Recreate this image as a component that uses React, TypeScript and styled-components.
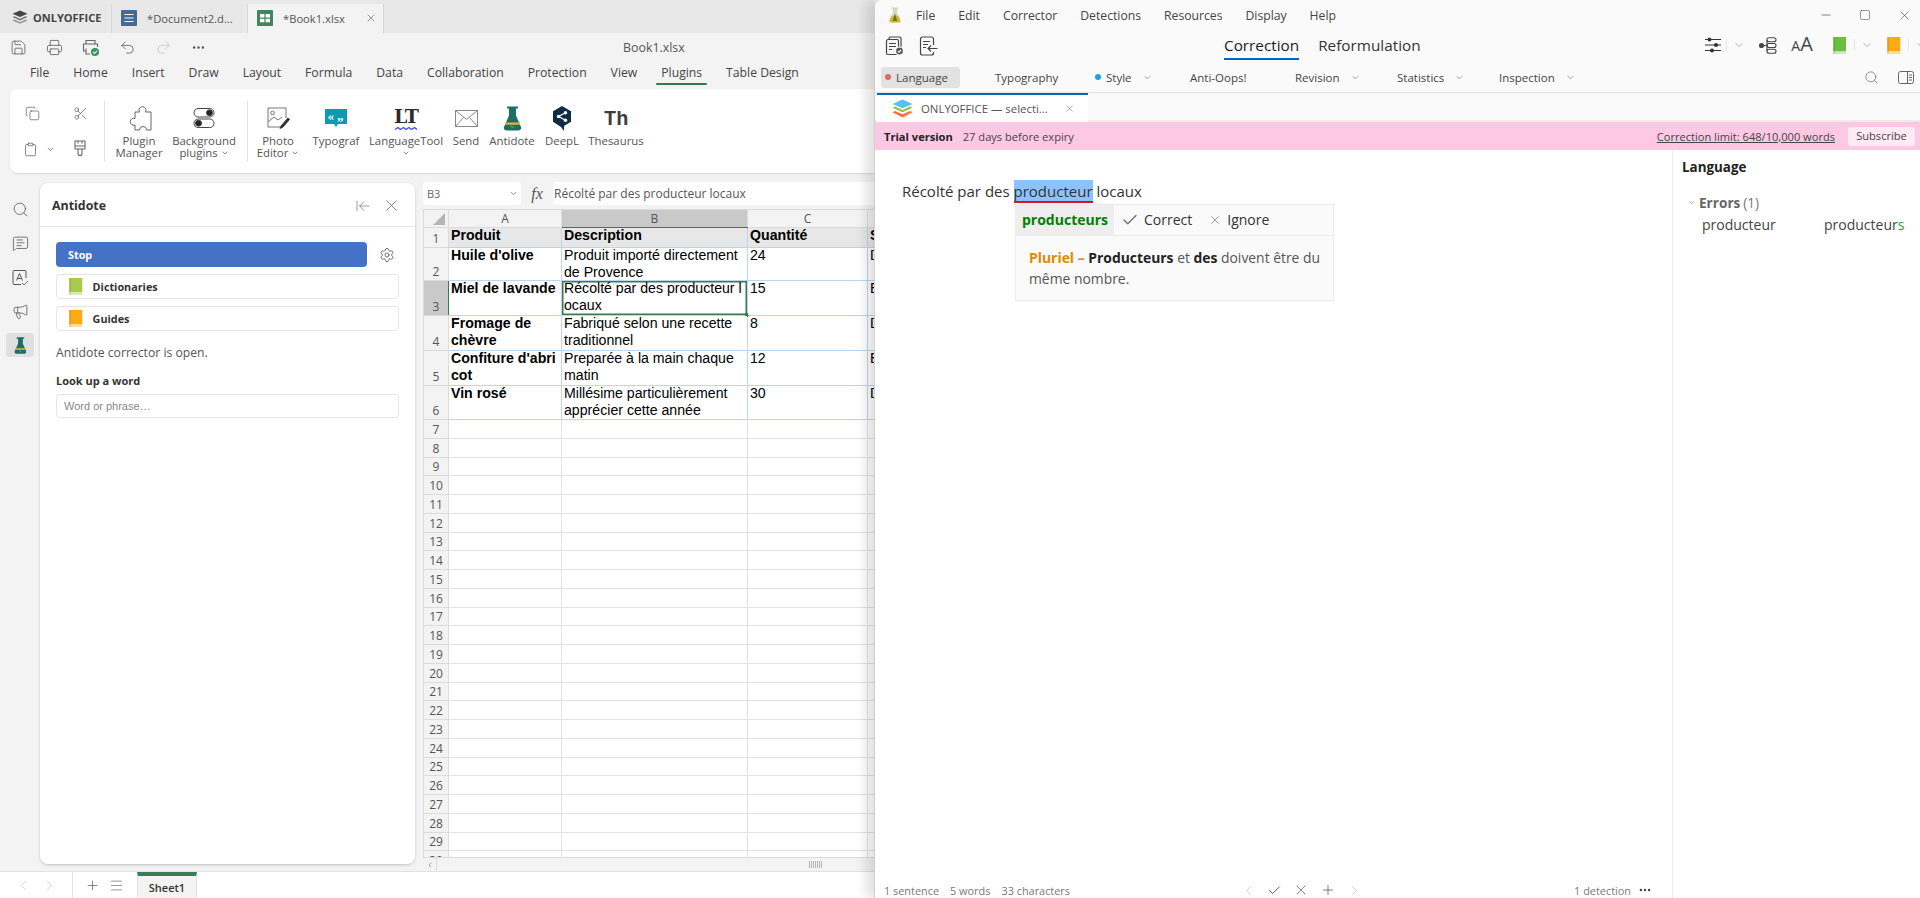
import styled, { createGlobalStyle } from "styled-components";
import {
  ArrowLeftToLine,
  Check,
  ChevronDown,
  ChevronLeft,
  ChevronRight,
  Clipboard,
  Copy,
  Menu,
  Megaphone,
  MessageSquareText,
  Minus,
  MoreHorizontal,
  Plus,
  Printer,
  Redo2,
  Save,
  Scissors,
  Search,
  Settings,
  Square,
  Undo2,
  X,
} from "lucide-react";

const UI = `"Open Sans", "Noto Sans", sans-serif`;

const GlobalStyle = createGlobalStyle`
  html, body { margin: 0; padding: 0; height: 100%; overflow: hidden; }
  body { font-family: ${UI}; color: #333; background: #f3f3f3; }
  #root { height: 100%; }
  * { box-sizing: border-box; }
`;

function Flask({ size = 25 }: { size?: number }) {
  return (
    <svg width={size * 0.76} height={size} viewBox="0 0 19 25">
      <path d="M4 0.5h11v2h-2v7l5 11.5a2.5 2.5 0 0 1-2.3 3.5H3.3A2.5 2.5 0 0 1 1 21l5-11.5v-7H4z" fill="#1f6e66" />
      <path d="M2.6 16.6h13.8l1 2.2H1.6z" fill="#e3b23c" />
      <path d="M7.5 20l2 1.4 1.6-1" stroke="#8fb24a" strokeWidth="1" fill="none" />
    </svg>
  );
}

function AppFlask() {
  return (
    <svg width="12" height="16" viewBox="0 0 19 25">
      <path d="M4 0.5h11v2h-2v7l5 11.5a2.5 2.5 0 0 1-2.3 3.5H3.3A2.5 2.5 0 0 1 1 21l5-11.5v-7H4z" fill="#d9d4c4" />
      <path d="M4.5 13.5h10l3.4 7.5a2.5 2.5 0 0 1-2.2 3.5H3.3A2.5 2.5 0 0 1 1 21z" fill="#f0a92a" />
      <path d="M9.5 10l3.5 12H6z" fill="#2f8f3a" />
    </svg>
  );
}

function BookIcon({ color, edge, height = 17 }: { color: string; edge: string; height?: number }) {
  return (
    <svg width={height * 0.8} height={height} viewBox="0 0 13 17">
      <rect x="0" y="0" width="13" height="14.5" fill={color} />
      <rect x="0" y="14.5" width="13" height="2.5" fill={edge} />
      <rect x="0" y="0" width="1.4" height="17" fill="#000" opacity="0.14" />
    </svg>
  );
}

function StackLogo() {
  return (
    <svg width="16" height="15" viewBox="0 0 16 15">
      <path d="M8 0.5l7.5 3.3L8 7.1.5 3.8z" fill="#444" />
      <path d="M2.4 6.2L8 8.7l5.6-2.5 1.9.9L8 10.4.5 7.1z" fill="#777" />
      <path d="M2.4 9.5L8 12l5.6-2.5 1.9.9L8 13.8.5 10.4z" fill="#999" />
    </svg>
  );
}

function ColorStack() {
  return (
    <svg width="21" height="20" viewBox="0 0 21 20">
      <path d="M10.5 0.5l10 4.4-10 4.4-10-4.4z" fill="#55c1ee" />
      <path d="M3 7.6l7.5 3.3L18 7.6l2.5 1.2-10 4.4-10-4.4z" fill="#95c03c" />
      <path d="M3 12l7.5 3.3L18 12l2.5 1.2-10 5.4-10-5.4z" fill="#ff6e3c" />
    </svg>
  );
}

function DocBadge() {
  return (
    <svg width="16" height="16" viewBox="0 0 16 16">
      <rect width="16" height="16" rx="1" fill="#446995" />
      <path d="M3.5 4.5h9M3.5 8h9M3.5 11.5h9" stroke="#fff" strokeWidth="1.2" />
    </svg>
  );
}

function SheetBadge() {
  return (
    <svg width="16" height="16" viewBox="0 0 16 16">
      <rect width="16" height="16" rx="1" fill="#40865c" />
      <path d="M3 4h4.4v3.6H3zM8.6 4H13v3.6H8.6zM3 8.8h4.4v3.4H3zM8.6 8.8H13v3.4H8.6z" fill="#fff" />
    </svg>
  );
}

function PrintOk() {
  return (
    <svg width="18" height="18" viewBox="0 0 18 18" fill="none" stroke="#666" strokeWidth="1.1">
      <path d="M4 5V1.5h9V5M4 12H1.5V5h14v3M4 9.5V15h4" />
      <circle cx="13" cy="13" r="4" fill="#2c9a5b" stroke="none" />
      <path d="M11 13l1.5 1.5 2.5-2.7" stroke="#fff" />
    </svg>
  );
}

function PainterIcon() {
  return (
    <svg width="12" height="18" viewBox="0 0 12 18" fill="none" stroke="#666" strokeWidth="1.1">
      <path d="M1 1h10v8H1zM1 6h10M4 1v2.5M8 1v2.5" />
      <path d="M4 9v4.5a2 2 0 0 0 4 0V9" />
    </svg>
  );
}

function PuzzleIcon() {
  return (
    <svg width="26" height="26" viewBox="0 0 26 26" fill="none" stroke="#666" strokeWidth="1">
      <path d="M9 7h4.5a3.5 3.5 0 1 1 6 0H25v18h-4.5a3.5 3.5 0 0 0-7 0H9v-5a3.5 3.5 0 1 1 0-6.5z" />
    </svg>
  );
}

function ToggleIcon() {
  return (
    <svg width="22" height="20" viewBox="0 0 22 20" fill="none" stroke="#444" strokeWidth="1">
      <rect x="1" y="0.5" width="20" height="8.5" rx="4.2" />
      <rect x="1" y="11" width="20" height="8.5" rx="4.2" />
      <circle cx="16.5" cy="4.8" r="3" fill="#222" />
      <circle cx="5.5" cy="15.2" r="3" fill="#222" />
    </svg>
  );
}

function PhotoIcon() {
  return (
    <svg width="24" height="22" viewBox="0 0 24 22" fill="none" stroke="#777" strokeWidth="1">
      <path d="M2 1h18v10M2 1v19h12" />
      <circle cx="6.5" cy="6" r="1.8" />
      <path d="M2 15l6-5 4 3 4-3" />
      <path d="M15 19l7-8 1.5 1.5-7 8-2.4.8z" fill="#333" stroke="#333" />
    </svg>
  );
}

function TypografIcon() {
  return (
    <svg width="22" height="19" viewBox="0 0 22 19">
      <path d="M0 0h22v15H13l-2 3-2-3H0z" fill="#0e9ab0" />
      <text x="2.5" y="11" fontSize="13" fontWeight="700" fill="#fff" fontFamily="Liberation Serif, serif">«</text>
      <text x="12" y="11" fontSize="13" fontWeight="700" fill="#fff" fontFamily="Liberation Serif, serif">„</text>
    </svg>
  );
}

function Squiggle() {
  return (
    <svg width="22" height="5" viewBox="0 0 22 5" fill="none" stroke="#3d4fe0" strokeWidth="1.4">
      <path d="M0 3.5l3-2 2.5 2 3-2 2.5 2 3-2 2.5 2 3-2 2.5 2" />
    </svg>
  );
}

function MailIcon() {
  return (
    <svg width="23" height="17" viewBox="0 0 23 17" fill="none" stroke="#888" strokeWidth="1">
      <rect x="0.5" y="0.5" width="22" height="16" />
      <path d="M0.5 0.5l11 9 11-9M0.5 16.5l8-9M22.5 16.5l-8-9" />
    </svg>
  );
}

function DeepLIcon() {
  return (
    <svg width="20" height="25" viewBox="0 0 20 25">
      <path d="M10 0l9 5.2v10.6L12 20v5l-3-4-8-5.2V5.2z" fill="#0f2b46" />
      <circle cx="6.5" cy="10.5" r="1.7" fill="#fff" />
      <circle cx="13.5" cy="6.8" r="1.7" fill="#fff" />
      <circle cx="13.5" cy="14.2" r="1.7" fill="#fff" />
      <path d="M6.5 10.5l7-3.7M6.5 10.5l7 3.7" stroke="#fff" strokeWidth="1.2" />
    </svg>
  );
}

function DocCheck() {
  return (
    <svg width="20" height="20" viewBox="0 0 20 20" fill="none" stroke="#444" strokeWidth="1.2">
      <path d="M4 3.5V2.5a1.5 1.5 0 0 1 1.5-1.5h9A1.5 1.5 0 0 1 16 2.5V11" />
      <rect x="1.5" y="3.5" width="12" height="15" rx="1.5" />
      <path d="M4 7.5h7M4 10.5h7M4 13.5h3" />
      <circle cx="14.5" cy="15" r="4" fill="#555" stroke="#fff" />
      <path d="M12.8 15l1.2 1.2 2.2-2.4" stroke="#fff" />
    </svg>
  );
}

function DocArrow() {
  return (
    <svg width="20" height="20" viewBox="0 0 20 20" fill="none" stroke="#444" strokeWidth="1.2">
      <path d="M14.5 9V3a2 2 0 0 0-2-2h-9a2 2 0 0 0-2 2v14a2 2 0 0 0 2 2h9a2 2 0 0 0 2-2v-1" />
      <path d="M4 5.5h7M4 8.5h5M4 11.5h3" />
      <path d="M18.5 12.5H9M12 9.5l-3 3 3 3" />
    </svg>
  );
}

function SlidersIcon() {
  return (
    <svg width="16" height="16" viewBox="0 0 16 16" stroke="#333" strokeWidth="1.2" fill="#333">
      <path d="M0 2.5h16M0 8h16M0 13.5h16" />
      <circle cx="4.5" cy="2.5" r="2" stroke="none" />
      <circle cx="11" cy="8" r="2" stroke="none" />
      <circle cx="7" cy="13.5" r="2" stroke="none" />
    </svg>
  );
}

function TreeIcon() {
  return (
    <svg width="18" height="17" viewBox="0 0 18 17" fill="none" stroke="#444" strokeWidth="1.1">
      <circle cx="2.5" cy="8.5" r="2" fill="#444" />
      <path d="M4.5 8.5H8M8 3v11" />
      <rect x="8" y="0.8" width="9" height="4" rx="2" />
      <rect x="8" y="6.5" width="9" height="4" rx="2" />
      <rect x="8" y="12.2" width="9" height="4" rx="2" />
    </svg>
  );
}

function PanelIcon() {
  return (
    <svg width="16" height="13" viewBox="0 0 16 13" fill="none" stroke="#666">
      <rect x="0.5" y="0.5" width="15" height="12" rx="2" />
      <path d="M9.5 0.5v12M11 4h3M11 6.5h3M11 9h3" />
    </svg>
  );
}

function AddInIcon() {
  return (
    <svg width="17" height="17" viewBox="0 0 17 17" fill="none" stroke="#555" strokeWidth="1">
      <path d="M9 15.5H2a1 1 0 0 1-1-1v-12a1 1 0 0 1 1-1h11a1 1 0 0 1 1 1V9" />
      <path d="M4.5 11.5L7.5 4.5l3 7M5.5 9.5h4" />
      <path d="M10 14l2 2 4-4" stroke="#4a7fc9" />
    </svg>
  );
}

const rail = [
  <Search size={17} strokeWidth={1.1} key="s" />,
  <MessageSquareText size={17} strokeWidth={1.1} key="c" />,
  <AddInIcon key="a" />,
  <Megaphone size={17} strokeWidth={1.1} key="m" />,
];

const leftMenu = ["File", "Home", "Insert", "Draw", "Layout", "Formula", "Data", "Collaboration", "Protection", "View", "Plugins", "Table Design"];
const rightMenu = ["File", "Edit", "Corrector", "Detections", "Resources", "Display", "Help"];

const sheetRows = [
  { n: 1, h: 20, a: "Produit", b: "Description", c: "Quantité", d: "S", head: true },
  { n: 2, h: 33, a: "Huile d'olive", b: "Produit importé directement\nde Provence", c: "24", d: "D" },
  { n: 3, h: 35, a: "Miel de lavande", b: "Récolté par des producteur l\nocaux", c: "15", d: "E", active: true },
  { n: 4, h: 35, a: "Fromage de\nchèvre", b: "Fabriqué selon une recette\ntraditionnel", c: "8", d: "D" },
  { n: 5, h: 35, a: "Confiture d'abri\ncot", b: "Preparée à la main chaque\nmatin", c: "12", d: "E" },
  { n: 6, h: 34, a: "Vin rosé", b: "Millésime particulièrement\napprécier cette année", c: "30", d: "D" },
];
const emptyRows = Array.from({ length: 24 }, (_, i) => i + 7);

export default function App() {
  return (
    <Page>
      <GlobalStyle />
      <LeftWindow>
        <TabBar>
          <BrandTab>
            <StackLogo />
            ONLYOFFICE
          </BrandTab>
          <DocTab $width={136}>
            <DocBadge />
            <DocName>*Document2.d...</DocName>
          </DocTab>
          <DocTab $width={136} $active>
            <SheetBadge />
            <DocName>*Book1.xlsx</DocName>
            <X size={12} strokeWidth={1.2} />
          </DocTab>
        </TabBar>
        <QuickBar>
          <QuickIcons>
            <Save size={17} strokeWidth={1.1} />
            <Printer size={17} strokeWidth={1.1} />
            <PrintOk />
            <Undo2 size={17} strokeWidth={1.1} />
            <Redo2 size={17} strokeWidth={1.1} color="#c4c4c4" />
            <MoreHorizontal size={15} />
          </QuickIcons>
          <FileTitle>Book1.xlsx</FileTitle>
        </QuickBar>
        <MenuRow>
          {leftMenu.map((m) => (
            <MenuItem key={m} $active={m === "Plugins"}>
              {m}
            </MenuItem>
          ))}
        </MenuRow>
        <Ribbon>
          <ClipGrid>
            <Copy size={15} strokeWidth={1.1} />
            <Scissors size={15} strokeWidth={1.1} />
            <ClipCell>
              <Clipboard size={15} strokeWidth={1.1} />
              <ChevronDown size={9} />
            </ClipCell>
            <PainterIcon />
          </ClipGrid>
          <RibbonDivider />
          <RibbonItem $width={68}>
            <RibbonIcon>
              <PuzzleIcon />
            </RibbonIcon>
            <RibbonLabel>Plugin{"\n"}Manager</RibbonLabel>
          </RibbonItem>
          <RibbonItem $width={62}>
            <RibbonIcon>
              <ToggleIcon />
            </RibbonIcon>
            <RibbonLabel>
              Background{"\n"}plugins <ChevronDown size={8} />
            </RibbonLabel>
          </RibbonItem>
          <RibbonDivider $before={12} />
          <RibbonItem $width={60}>
            <RibbonIcon>
              <PhotoIcon />
            </RibbonIcon>
            <RibbonLabel>
              Photo{"\n"}Editor <ChevronDown size={8} />
            </RibbonLabel>
          </RibbonItem>
          <RibbonItem $width={56}>
            <RibbonIcon>
              <TypografIcon />
            </RibbonIcon>
            <RibbonLabel>Typograf</RibbonLabel>
          </RibbonItem>
          <RibbonItem $width={84}>
            <RibbonIcon>
              <LtStack>
                <LtMark>LT</LtMark>
                <Squiggle />
              </LtStack>
            </RibbonIcon>
            <RibbonLabel>
              LanguageTool{"\n"}
              <ChevronDown size={8} />
            </RibbonLabel>
          </RibbonItem>
          <RibbonItem $width={36}>
            <RibbonIcon>
              <MailIcon />
            </RibbonIcon>
            <RibbonLabel>Send</RibbonLabel>
          </RibbonItem>
          <RibbonItem $width={56}>
            <RibbonIcon>
              <Flask />
            </RibbonIcon>
            <RibbonLabel>Antidote</RibbonLabel>
          </RibbonItem>
          <RibbonItem $width={44}>
            <RibbonIcon>
              <DeepLIcon />
            </RibbonIcon>
            <RibbonLabel>DeepL</RibbonLabel>
          </RibbonItem>
          <RibbonItem $width={64}>
            <RibbonIcon>
              <ThMark>Th</ThMark>
            </RibbonIcon>
            <RibbonLabel>Thesaurus</RibbonLabel>
          </RibbonItem>
        </Ribbon>
        <Workspace>
          <Rail>
            {rail.map((icon, i) => (
              <RailButton key={i}>{icon}</RailButton>
            ))}
            <RailButton $active>
              <Flask size={17} />
            </RailButton>
          </Rail>
          <Panel>
            <PanelHeader>
              <PanelTitle>Antidote</PanelTitle>
              <ArrowLeftToLine size={16} strokeWidth={1} />
              <X size={19} strokeWidth={1} />
            </PanelHeader>
            <PanelBody>
              <StopRow>
                <StopButton>Stop</StopButton>
                <Settings size={16} strokeWidth={1.1} />
              </StopRow>
              <BookButton>
                <BookIcon color="#a9c94f" edge="#dfe8c0" />
                Dictionaries
              </BookButton>
              <BookButton>
                <BookIcon color="#fdab14" edge="#fbdc9c" />
                Guides
              </BookButton>
              <PanelNote>Antidote corrector is open.</PanelNote>
              <LookupLabel>Look up a word</LookupLabel>
              <LookupInput>Word or phrase…</LookupInput>
            </PanelBody>
          </Panel>
          <SheetArea>
            <FormulaBar>
              <NameBox>
                B3
                <ChevronDown size={9} />
              </NameBox>
              <FxMark>fx</FxMark>
              <FormulaInput>Récolté par des producteur locaux</FormulaInput>
            </FormulaBar>
            <GridClip>
              <SheetTable>
                <colgroup>
                  <col width={25} />
                  <col width={113} />
                  <col width={186} />
                  <col width={120} />
                  <col width={7} />
                </colgroup>
                <thead>
                  <tr>
                    <ColHead>
                      <Corner />
                    </ColHead>
                    <ColHead>A</ColHead>
                    <ColHead $active>B</ColHead>
                    <ColHead>C</ColHead>
                    <ColHead />
                  </tr>
                </thead>
                <tbody>
                  {sheetRows.map((r) => (
                    <tr key={r.n} style={{ height: r.h }}>
                      <RowHead $active={r.active}>{r.n}</RowHead>
                      <Cell $bold $table $head={r.head}><CellText>{r.a}</CellText></Cell>
                      <Cell $bold={r.head} $table $head={r.head} $selected={r.active}>
                        <CellText>{r.b}</CellText>
                        {r.active && <FillHandle />}
                      </Cell>
                      <Cell $bold={r.head} $table $head={r.head}><CellText>{r.c}</CellText></Cell>
                      <Cell $bold={r.head} $table $head={r.head}><CellText>{r.d}</CellText></Cell>
                    </tr>
                  ))}
                  {emptyRows.map((n) => (
                    <EmptyRow key={n}>
                      <RowHead>{n}</RowHead>
                      <Cell />
                      <Cell />
                      <Cell />
                      <Cell />
                    </EmptyRow>
                  ))}
                </tbody>
              </SheetTable>
            </GridClip>
            <HScroll>
              <ScrollArrow>
                <ChevronLeft size={8} />
              </ScrollArrow>
              <ScrollTrack>
                <ScrollGrip />
              </ScrollTrack>
            </HScroll>
          </SheetArea>
        </Workspace>
        <SheetTabs>
          <SheetNav>
            <ChevronLeft size={17} strokeWidth={0.9} />
            <ChevronRight size={17} strokeWidth={0.9} />
          </SheetNav>
          <SheetTools>
            <Plus size={15} strokeWidth={1.1} />
            <Menu size={15} strokeWidth={1.4} color="#888" />
          </SheetTools>
          <SheetTab>Sheet1</SheetTab>
        </SheetTabs>
      </LeftWindow>

      <RightWindow>
        <TitleBar>
          <AppMark>
            <AppFlask />
          </AppMark>
          {rightMenu.map((m) => (
            <TitleMenu key={m}>{m}</TitleMenu>
          ))}
          <WindowButtons>
            <Minus size={14} strokeWidth={1.1} />
            <Square size={12} strokeWidth={1.1} />
            <X size={15} strokeWidth={1} />
          </WindowButtons>
        </TitleBar>
        <ModeBar>
          <ModeIcons>
            <DocCheck />
            <DocArrow />
          </ModeIcons>
          <ModeTabs>
            <ModeTab $active>Correction</ModeTab>
            <ModeTab>Reformulation</ModeTab>
          </ModeTabs>
          <ModeTools>
            <SlidersIcon />
            <ToolChevron $gap={5}><ChevronDown size={12} strokeWidth={1} /></ToolChevron>
            <TreeIcon />
            <SizeMark>
              <small>A</small>A
            </SizeMark>
            <BookIcon color="#6abf40" edge="#cfe6c4" height={17} />
            <ToolChevron $gap={8}><ChevronDown size={12} strokeWidth={1} /></ToolChevron>
            <BookIcon color="#fdab14" edge="#fbdc9c" height={17} />
            <ToolChevron $gap={7}><ChevronDown size={12} strokeWidth={1} /></ToolChevron>
          </ModeTools>
        </ModeBar>
        <FilterBar>
          <FilterChip $active $width={79} $pad={4}>
            <Dot $color="#d86b6b" />
            Language
          </FilterChip>
          <FilterChip $width={130} $pad={35}>Typography</FilterChip>
          <FilterChip $width={90} $pad={5}>
            <Dot $color="#1ba1e8" />
            Style
            <ChevronDown size={11} strokeWidth={1} />
          </FilterChip>
          <FilterChip $width={105} $pad={10}>Anti-Oops!</FilterChip>
          <FilterChip $width={102} $pad={10}>
            Revision
            <ChevronDown size={11} strokeWidth={1} />
          </FilterChip>
          <FilterChip $width={102} $pad={10}>
            Statistics
            <ChevronDown size={11} strokeWidth={1} />
          </FilterChip>
          <FilterChip $width={100} $pad={10}>
            Inspection
            <ChevronDown size={11} strokeWidth={1} />
          </FilterChip>
          <FilterTools>
            <Search size={15} strokeWidth={1.1} />
            <PanelIcon />
          </FilterTools>
        </FilterBar>
        <DocStrip>
          <DocStripTab>
            <ColorStack />
            <DocStripName>ONLYOFFICE — selecti...</DocStripName>
            <X size={11} strokeWidth={1} />
          </DocStripTab>
        </DocStrip>
        <TrialBanner>
          <strong>Trial version</strong>
          <span>27 days before expiry</span>
          <LimitLink>Correction limit: 648/10,000 words</LimitLink>
          <SubscribeButton>Subscribe</SubscribeButton>
        </TrialBanner>
        <Editor>
          <EditorMain>
            <EditorText>
              Récolté par des <Marked>producteur</Marked> locaux
              <Popover>
                <PopoverHead>
                  <Suggestion>producteurs</Suggestion>
                  <PopAction $gap={9}>
                    <Check size={18} strokeWidth={1.6} />
                    Correct
                  </PopAction>
                  <PopAction>
                    <X size={14} strokeWidth={1} />
                    Ignore
                  </PopAction>
                </PopoverHead>
                <PopoverBody>
                  <Rule>Pluriel – </Rule>
                  <b>Producteurs</b> et <b>des</b> doivent être du même nombre.
                </PopoverBody>
              </Popover>
            </EditorText>
            <StatusBar>
              <StatusCounts>
                <span>1 sentence</span>
                <span>5 words</span>
                <span>33 characters</span>
              </StatusCounts>
              <StatusNav>
                <ChevronLeft size={15} strokeWidth={0.9} color="#aaa" />
                <Check size={15} strokeWidth={1.3} />
                <X size={16} strokeWidth={1} />
                <Plus size={16} strokeWidth={1} />
                <ChevronRight size={15} strokeWidth={0.9} color="#aaa" />
              </StatusNav>
              <StatusRight>
                1 detection
                <MoreHorizontal size={14} strokeWidth={2.2} />
              </StatusRight>
            </StatusBar>
          </EditorMain>
          <SidePanel>
            <SideTitle>Language</SideTitle>
            <SideGroup>
              <ChevronDown size={9} strokeWidth={1.5} />
              <b>Errors</b> (1)
            </SideGroup>
            <SideRow>
              <span>producteur</span>
              <span>
                producteur<GreenLetter>s</GreenLetter>
              </span>
            </SideRow>
          </SidePanel>
        </Editor>
      </RightWindow>
    </Page>
  );
}

const Page = styled.div`
  display: flex;
  width: 1920px;
  height: 898px;
  overflow: hidden;
`;

const LeftWindow = styled.div`
  width: 874px;
  flex: none;
  display: flex;
  flex-direction: column;
  background: #f3f3f3;
  font-size: 12.2px;
`;

const TabBar = styled.div`
  height: 33px;
  display: flex;
  background: #e8e8e8;
  padding-top: 4px;
`;

const BrandTab = styled.div`
  width: 112px;
  display: flex;
  align-items: center;
  gap: 5px;
  padding: 0 0 3px 12px;
  font-size: 11px;
  font-weight: 700;
  color: #444;
  border-right: 1px solid #d8d8d8;
`;

const DocTab = styled.div<{ $width: number; $active?: boolean }>`
  width: ${(p) => p.$width}px;
  display: flex;
  align-items: center;
  gap: 10px;
  padding: 0 6px 1px 9px;
  font-size: 11.2px;
  color: #555;
  background: ${(p) => (p.$active ? "#f3f3f3" : "transparent")};
  border-right: 1px solid #d8d8d8;
`;

const DocName = styled.span`
  flex: 1;
  white-space: nowrap;
`;

const QuickBar = styled.div`
  height: 29px;
  position: relative;
  display: flex;
  align-items: center;
`;

const QuickIcons = styled.div`
  display: flex;
  align-items: center;
  gap: 19px;
  padding-left: 10px;
  color: #555;
`;

const FileTitle = styled.div`
  position: absolute;
  left: 623px;
  top: 6px;
  font-size: 12.4px;
  color: #555;
`;

const MenuRow = styled.div`
  height: 27px;
  display: flex;
  gap: 24px;
  padding: 2px 0 0 30px;
`;

const MenuItem = styled.div<{ $active?: boolean }>`
  position: relative;
  height: 18px;
  line-height: 18px;
  color: #444;
  white-space: nowrap;
  &::after {
    content: "";
    display: ${(p) => (p.$active ? "block" : "none")};
    position: absolute;
    left: -5px;
    right: -5px;
    top: 19px;
    height: 2px;
    border-radius: 1px;
    background: #2e7d4f;
  }
`;

const Ribbon = styled.div`
  height: 84px;
  margin-left: 10px;
  display: flex;
  align-items: flex-start;
  padding-top: 12px;
  background: #fff;
  border-radius: 7px 0 0 7px;
  box-shadow: 0 1px 2px rgba(0, 0, 0, 0.12);
`;

const ClipGrid = styled.div`
  width: 94px;
  height: 72px;
  margin-top: -6px;
  display: grid;
  grid-template-columns: 44px 52px;
  grid-template-rows: 1fr 1fr;
  justify-items: center;
  align-items: center;
  color: #555;
`;

const ClipCell = styled.div`
  display: flex;
  align-items: center;
  gap: 8px;
  margin-left: 13px;
`;

const RibbonDivider = styled.div<{ $before?: number }>`
  width: 1px;
  height: 60px;
  margin-left: ${(p) => p.$before ?? 0}px;
  background: #e2e2e2;
  flex: none;
`;

const RibbonItem = styled.div<{ $width: number }>`
  width: ${(p) => p.$width}px;
  flex: none;
  display: flex;
  flex-direction: column;
  align-items: center;
  color: #555;
`;

const RibbonIcon = styled.div`
  height: 32px;
  display: flex;
  align-items: center;
  justify-content: center;
  margin-top: 1px;
  color: #444;
`;

const RibbonLabel = styled.div`
  margin-top: 1px;
  font-size: 11.4px;
  line-height: 12px;
  text-align: center;
  white-space: pre;
  color: #555;
`;

const LtStack = styled.div`
  display: flex;
  flex-direction: column;
  align-items: center;
`;

const LtMark = styled.div`
  font-family: "DejaVu Serif", serif;
  font-weight: 700;
  font-size: 19px;
  line-height: 20px;
  letter-spacing: -1px;
  color: #2b2b2b;
`;

const ThMark = styled.div`
  font-family: "Inter", sans-serif;
  font-weight: 700;
  font-size: 19px;
  color: #3d3d3d;
`;

const Workspace = styled.div`
  flex: 1;
  min-height: 0;
  display: flex;
  padding-top: 10px;
`;

const Rail = styled.div`
  width: 40px;
  flex: none;
  display: flex;
  flex-direction: column;
  align-items: center;
  gap: 10px;
  padding-top: 14px;
  color: #555;
`;

const RailButton = styled.div<{ $active?: boolean }>`
  width: 28px;
  height: 24px;
  display: flex;
  align-items: center;
  justify-content: center;
  border-radius: 3px;
  background: ${(p) => (p.$active ? "#e0e0e0" : "transparent")};
`;

const Panel = styled.div`
  width: 375px;
  height: 681px;
  flex: none;
  background: #fff;
  border-radius: 8px;
  box-shadow: 0 1px 3px rgba(0, 0, 0, 0.2);
`;

const PanelHeader = styled.div`
  height: 44px;
  display: flex;
  align-items: center;
  gap: 11px;
  padding: 2px 14px 0 12px;
  border-bottom: 1px solid #e4e4e4;
  color: #666;
`;

const PanelTitle = styled.div`
  flex: 1;
  font-size: 12.4px;
  font-weight: 700;
  color: #333;
`;

const PanelBody = styled.div`
  padding: 15px 16px 0;
  display: flex;
  flex-direction: column;
`;

const StopRow = styled.div`
  display: flex;
  align-items: center;
  gap: 12px;
  color: #444;
`;

const StopButton = styled.div`
  width: 311px;
  height: 25px;
  padding-left: 12px;
  line-height: 25px;
  border-radius: 4px;
  background: #4472c4;
  color: #fff;
  font-size: 10.8px;
  font-weight: 700;
`;

const BookButton = styled.div`
  height: 25px;
  margin-top: 7px;
  display: flex;
  align-items: center;
  gap: 10px;
  padding-left: 12px;
  border: 1px solid #e6e6e6;
  border-radius: 4px;
  font-size: 10.8px;
  font-weight: 700;
  color: #333;
  & + & {
    margin-top: 7px;
  }
`;

const PanelNote = styled.div`
  margin-top: 13px;
  font-size: 12.2px;
  color: #555;
`;

const LookupLabel = styled.div`
  margin-top: 12px;
  font-size: 11px;
  font-weight: 700;
  color: #333;
`;

const LookupInput = styled.div`
  height: 24px;
  margin-top: 6px;
  padding-left: 7px;
  line-height: 22px;
  border: 1px solid #e6e6e6;
  border-radius: 4px;
  font-family: "Liberation Sans", sans-serif;
  font-size: 11px;
  color: #888;
`;

const SheetArea = styled.div`
  flex: 1;
  min-width: 0;
  margin-left: 8px;
  display: flex;
  flex-direction: column;
`;

const FormulaBar = styled.div`
  height: 23px;
  margin-top: -1px;
  display: flex;
  align-items: center;
`;

const NameBox = styled.div`
  width: 98px;
  height: 23px;
  display: flex;
  align-items: center;
  justify-content: space-between;
  padding: 0 3px 0 4px;
  background: #fff;
  border-radius: 3px;
  font-size: 11px;
  color: #666;
`;

const FxMark = styled.div`
  width: 32px;
  text-align: center;
  font-family: "Liberation Serif", serif;
  font-style: italic;
  font-size: 16px;
  color: #555;
`;

const FormulaInput = styled.div`
  flex: 1;
  height: 23px;
  padding-left: 1px;
  line-height: 23px;
  background: #fff;
  border-radius: 3px 0 0 3px;
  font-size: 12px;
  color: #555;
  white-space: nowrap;
`;

const GridClip = styled.div`
  height: 650px;
  margin-top: 4px;
  overflow: hidden;
  background: #fff;
`;

const SheetTable = styled.table`
  table-layout: fixed;
  width: 451px;
  border-collapse: collapse;
  font-family: "Liberation Sans", sans-serif;
  font-size: 14.15px;
`;

const ColHead = styled.th<{ $active?: boolean }>`
  height: 18px;
  padding: 0;
  position: relative;
  font-family: ${UI};
  font-size: 12px;
  line-height: 15px;
  font-weight: 400;
  color: #555;
  background: ${(p) => (p.$active ? "#c9c9c9" : "#f3f3f3")};
  border: 1px solid #dcdcdc;
  border-bottom: 1px solid ${(p) => (p.$active ? "#3a7a57" : "#dcdcdc")};
`;

const Corner = styled.div`
  position: absolute;
  right: 3px;
  bottom: 2px;
  width: 0;
  height: 0;
  border-left: 12px solid transparent;
  border-bottom: 12px solid #b5b5b5;
`;

const RowHead = styled.td<{ $active?: boolean }>`
  padding: 0 0 1px;
  text-align: center;
  vertical-align: bottom;
  font-family: ${UI};
  font-size: 12px;
  line-height: 15px;
  color: #555;
  background: ${(p) => (p.$active ? "#c9c9c9" : "#f3f3f3")};
  border: 1px solid #dcdcdc;
  border-right-color: ${(p) => (p.$active ? "#3a7a57" : "#dcdcdc")};
`;

const Cell = styled.td<{ $bold?: boolean; $table?: boolean; $head?: boolean; $selected?: boolean }>`
  position: relative;
  padding: 0 2px;
  vertical-align: top;
  overflow: hidden;
  color: #000;
  font-weight: ${(p) => (p.$bold ? 700 : 400)};
  background: ${(p) => (p.$head ? "#e7e7e7" : "#fff")};
  border: 1px solid ${(p) => (p.$table ? "#bcd6ee" : "#e2e2e2")};
  ${(p) => (p.$selected ? "box-shadow: inset 0 0 0 1.5px #3a7a57; overflow: visible;" : "")}
`;

const CellText = styled.div`
  line-height: 17px;
  white-space: pre;
  margin: -1px 0 -4px;
`;

const FillHandle = styled.div`
  position: absolute;
  right: -2px;
  bottom: -2px;
  width: 4px;
  height: 4px;
  background: #3a7a57;
`;

const EmptyRow = styled.tr`
  height: 18.75px;
`;

const HScroll = styled.div`
  height: 14px;
  display: flex;
  background: #f3f3f3;
  border-top: 1px solid #dcdcdc;
`;

const ScrollArrow = styled.div`
  width: 14px;
  display: flex;
  align-items: center;
  justify-content: center;
  border-right: 1px solid #dcdcdc;
  color: #777;
`;

const ScrollTrack = styled.div`
  flex: 1;
  display: flex;
  align-items: center;
  justify-content: flex-end;
  padding-right: 52px;
`;

const ScrollGrip = styled.div`
  width: 13px;
  height: 7px;
  background: repeating-linear-gradient(90deg, #b5b5b5 0 1px, transparent 1px 2px);
`;

const SheetTabs = styled.div`
  height: 27px;
  display: flex;
  align-items: stretch;
  background: #fff;
  border-top: 1px solid #e2e2e2;
  flex: none;
`;

const SheetNav = styled.div`
  width: 73px;
  display: flex;
  align-items: center;
  justify-content: center;
  gap: 9px;
  color: #bbb;
  border-right: 1px solid #e2e2e2;
`;

const SheetTools = styled.div`
  width: 64px;
  display: flex;
  align-items: center;
  gap: 9px;
  padding-left: 12px;
  color: #555;
`;

const SheetTab = styled.div`
  width: 60px;
  text-align: center;
  line-height: 24px;
  font-size: 11px;
  font-weight: 600;
  color: #333;
  background: #f3f3f3;
  border-top: 4px solid #3f7a57;
  border-right: 1px solid #e2e2e2;
  border-left: 1px solid #e2e2e2;
`;

const RightWindow = styled.div`
  flex: 1;
  min-width: 0;
  display: flex;
  flex-direction: column;
  background: #fafafa;
  border-left: 1px solid #cfcfcf;
  border-radius: 6px 0 0 0;
  box-shadow: -8px 0 12px rgba(0, 0, 0, 0.12);
  position: relative;
  z-index: 2;
  font-size: 12.2px;
  color: #444;
`;

const TitleBar = styled.div`
  height: 30px;
  display: flex;
  align-items: center;
  gap: 23px;
  padding-left: 13px;
  flex: none;
`;

const AppMark = styled.div`
  width: 14px;
  margin-right: -9px;
  display: flex;
  justify-content: center;
`;

const TitleMenu = styled.div`
  font-size: 12.2px;
`;

const WindowButtons = styled.div`
  margin-left: auto;
  display: flex;
  align-items: center;
  gap: 26px;
  padding-right: 8px;
`;

const ModeBar = styled.div`
  height: 32px;
  display: flex;
  align-items: center;
  padding-left: 10px;
  flex: none;
`;

const ModeIcons = styled.div`
  display: flex;
  gap: 14px;
  width: 339px;
`;

const ModeTabs = styled.div`
  display: flex;
  gap: 19px;
  margin-top: 1px;
`;

const ModeTab = styled.div<{ $active?: boolean }>`
  height: 27px;
  line-height: 25px;
  font-size: 15.3px;
  color: ${(p) => (p.$active ? "#1a1a1a" : "#333")};
  font-weight: ${(p) => (p.$active ? 500 : 400)};
  border-bottom: 2px solid ${(p) => (p.$active ? "#0067c0" : "transparent")};
`;

const ModeTools = styled.div`
  margin-left: auto;
  margin-right: -7px;
  margin-top: -2px;
  display: flex;
  align-items: center;
  gap: 14px;
  color: #444;
`;

const ToolChevron = styled.div<{ $gap: number }>`
  margin-left: ${(p) => p.$gap - 14}px;
  padding-left: 6px;
  border-left: 1px solid #e6e6e6;
  display: flex;
  color: #666;
`;

const SizeMark = styled.div`
  font-size: 20px;
  line-height: 18px;
  margin-right: 6px;
  small {
    font-size: 14px;
  }
`;

const FilterBar = styled.div`
  height: 31px;
  display: flex;
  align-items: center;
  padding: 0 6px;
  border-bottom: 1px solid #e4e4e4;
  flex: none;
`;

const FilterChip = styled.div<{ $active?: boolean; $width: number; $pad: number }>`
  width: ${(p) => p.$width}px;
  height: 21px;
  flex: none;
  display: flex;
  align-items: center;
  gap: 5px;
  padding-left: ${(p) => p.$pad}px;
  border-radius: 3px;
  font-size: 11.5px;
  white-space: nowrap;
  background: ${(p) => (p.$active ? "#e2e2e2" : "transparent")};
  svg {
    margin-left: 5px;
  }
`;

const Dot = styled.span<{ $color: string }>`
  width: 6px;
  height: 6px;
  border-radius: 50%;
  background: ${(p) => p.$color};
`;

const FilterTools = styled.div`
  margin-left: auto;
  display: flex;
  align-items: center;
  gap: 19px;
  color: #666;
`;

const DocStrip = styled.div`
  height: 29px;
  padding-left: 2px;
  border-bottom: 2px solid #ececec;
  flex: none;
`;

const DocStripTab = styled.div`
  width: 211px;
  height: 29px;
  display: flex;
  align-items: center;
  gap: 8px;
  padding: 0 13px 0 15px;
  background: #fff;
  border-top: 2px solid #0067c0;
  font-size: 11.4px;
  color: #555;
`;

const DocStripName = styled.span`
  flex: 1;
  white-space: nowrap;
`;

const TrialBanner = styled.div`
  height: 28px;
  display: flex;
  align-items: center;
  padding: 0 5px 0 9px;
  background: #fdc8e4;
  font-size: 11.1px;
  color: #444;
  flex: none;
  strong {
    color: #222;
    margin-right: 10px;
  }
`;

const LimitLink = styled.span`
  margin-left: auto;
  text-decoration: underline;
`;

const SubscribeButton = styled.div`
  width: 67px;
  height: 19px;
  margin-left: 13px;
  text-align: center;
  line-height: 18px;
  border-radius: 3px;
  background: #fdeaf4;
`;

const Editor = styled.div`
  flex: 1;
  min-height: 0;
  display: flex;
  background: #fff;
`;

const EditorMain = styled.div`
  flex: 1;
  min-width: 0;
  display: flex;
  flex-direction: column;
`;

const EditorText = styled.div`
  flex: 1;
  position: relative;
  padding: 30px 0 0 27px;
  font-size: 15px;
  line-height: 22px;
  color: #333;
`;

const Marked = styled.span`
  display: inline-block;
  height: 23px;
  background: #8ac3ff;
  border-bottom: 2px solid #e0101e;
`;

const Popover = styled.div`
  position: absolute;
  left: 140px;
  top: 54px;
  width: 319px;
  height: 97px;
  background: #fafafa;
  border: 1px solid #ececec;
  box-shadow: 0 0 1px rgba(0, 0, 0, 0.1);
`;

const PopoverHead = styled.div`
  height: 31px;
  display: flex;
  align-items: center;
  border-bottom: 1px solid #ececec;
`;

const Suggestion = styled.div`
  width: 98px;
  height: 30px;
  flex: none;
  text-align: center;
  line-height: 29px;
  background: #eeeeee;
  color: #008000;
  font-weight: 700;
  font-size: 14px;
`;

const PopAction = styled.div<{ $gap?: number }>`
  display: flex;
  align-items: center;
  gap: 5px;
  margin-left: 7px;
  margin-right: ${(p) => p.$gap ?? 0}px;
  font-size: 14px;
  color: #333;
  svg {
    color: #666;
  }
`;

const PopoverBody = styled.div`
  padding: 11px 8px 0 13px;
  font-size: 13.9px;
  line-height: 21px;
  color: #555;
  b {
    color: #222;
  }
`;

const Rule = styled.span`
  color: #e08a00;
  font-weight: 700;
`;

const StatusBar = styled.div`
  height: 28px;
  display: grid;
  grid-template-columns: 357px 1fr auto;
  align-items: center;
  padding: 12px 20px 0 9px;
  font-size: 10.9px;
  color: #777;
  flex: none;
`;

const StatusCounts = styled.div`
  display: flex;
  gap: 11px;
`;

const StatusNav = styled.div`
  display: flex;
  align-items: center;
  gap: 11px;
  color: #444;
`;

const StatusRight = styled.div`
  display: flex;
  align-items: center;
  gap: 7px;
  svg {
    color: #444;
  }
`;

const SidePanel = styled.div`
  width: 248px;
  flex: none;
  padding: 8px 0 0 9px;
  border-left: 1px solid #ececec;
`;

const SideTitle = styled.div`
  font-size: 13.4px;
  font-weight: 700;
  color: #222;
`;

const SideGroup = styled.div`
  margin-top: 17px;
  padding-left: 5px;
  display: flex;
  align-items: center;
  gap: 3px;
  font-size: 13.6px;
  color: #777;
  b {
    color: #666;
  }
`;

const SideRow = styled.div`
  display: grid;
  grid-template-columns: 122px auto;
  justify-content: start;
  margin-top: 3px;
  padding-left: 20px;
  font-size: 14px;
  line-height: 20px;
  color: #444;
`;

const GreenLetter = styled.span`
  color: #2c9a2c;
`;
